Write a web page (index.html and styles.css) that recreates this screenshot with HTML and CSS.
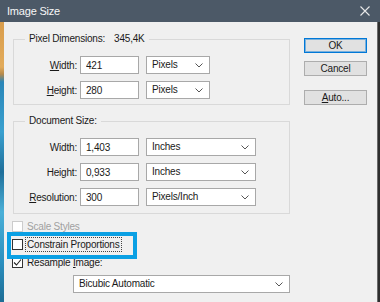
FILE: index.html
```html
<!DOCTYPE html>
<html lang="en">
<head>
  <meta charset="UTF-8" />
  <title>Image Size</title>
  <link rel="stylesheet" href="styles.css">
</head>
<body>
  <div class="window">
    <div class="titlebar">
      <span class="title">Image Size</span>
      <svg class="close" width="10" height="10" viewBox="0 0 10 10">
        <path d="M0.5 0.5 L9.5 9.5 M9.5 0.5 L0.5 9.5" stroke="#e8e8e8" stroke-width="1.1" fill="none"/>
      </svg>
    </div>
    <div class="frame">
      <div class="strip-left"></div>
      <div class="dialog">
        <div class="top">
          <div class="groups">
            <fieldset class="group">
              <legend>Pixel Dimensions:<span class="size">345,4K</span></legend>
              <div class="rows">
                <div class="row">
                  <label class="lbl"><u>W</u>idth:</label>
                  <input class="field" type="text" value="421">
                  <div class="dropdown short">Pixels<svg class="chev" width="8" height="5" viewBox="0 0 8 5"><path d="M0.5 0.5 L4 4 L7.5 0.5" stroke="#555" fill="none"/></svg></div>
                </div>
                <div class="row">
                  <label class="lbl"><u>H</u>eight:</label>
                  <input class="field" type="text" value="280">
                  <div class="dropdown short">Pixels<svg class="chev" width="8" height="5" viewBox="0 0 8 5"><path d="M0.5 0.5 L4 4 L7.5 0.5" stroke="#555" fill="none"/></svg></div>
                </div>
              </div>
            </fieldset>
            <fieldset class="group second">
              <legend>Document Size:</legend>
              <div class="rows">
                <div class="row">
                  <label class="lbl">Width:</label>
                  <input class="field" type="text" value="1,403">
                  <div class="dropdown">Inches<svg class="chev" width="8" height="5" viewBox="0 0 8 5"><path d="M0.5 0.5 L4 4 L7.5 0.5" stroke="#555" fill="none"/></svg></div>
                </div>
                <div class="row">
                  <label class="lbl">Height:</label>
                  <input class="field" type="text" value="0,933">
                  <div class="dropdown">Inches<svg class="chev" width="8" height="5" viewBox="0 0 8 5"><path d="M0.5 0.5 L4 4 L7.5 0.5" stroke="#555" fill="none"/></svg></div>
                </div>
                <div class="row">
                  <label class="lbl"><u>R</u>esolution:</label>
                  <input class="field" type="text" value="300">
                  <div class="dropdown">Pixels/Inch<svg class="chev" width="8" height="5" viewBox="0 0 8 5"><path d="M0.5 0.5 L4 4 L7.5 0.5" stroke="#555" fill="none"/></svg></div>
                </div>
              </div>
            </fieldset>
          </div>
          <div class="buttons">
            <button class="btn default">OK</button>
            <button class="btn">Cancel</button>
            <button class="btn auto"><u>A</u>uto...</button>
          </div>
        </div>
        <div class="checks">
          <div class="check disabled"><span class="box"></span><span>Scale Styles</span></div>
          <div class="check"><span class="box"></span><span class="focus">Constrain Proportions</span></div>
          <div class="check"><span class="box"><svg width="9" height="9" viewBox="0 0 9 9"><path d="M1 4.5 L3.5 7 L8 1.5" stroke="#222" stroke-width="1.1" fill="none"/></svg></span><span>Resample <u>I</u>mage:</span></div>
          <div class="dropdown wide">Bicubic Automatic<svg class="chev" width="8" height="5" viewBox="0 0 8 5"><path d="M0.5 0.5 L4 4 L7.5 0.5" stroke="#555" fill="none"/></svg></div>
        </div>
      </div>
      <div class="strip-right"></div>
    </div>
    <div class="highlight"></div>
  </div>
</body>
</html>
```

FILE: styles.css
```css
body {
  margin: 0;
  font-family: "Liberation Sans", Arial, sans-serif;
  font-size: 10px;
  letter-spacing: -0.2px;
  color: #1a1a1a;
  background-color: #333;
}
.window {
  position: relative;
  width: 380px;
  height: 302px;
  overflow: hidden;
}
.titlebar {
  height: 22px;
  background-color: #4c5967;
  display: flex;
  align-items: center;
  justify-content: space-between;
  padding: 0 10px 0 7px;
  box-sizing: border-box;
}
.title {
  color: #f7f7f7;
  font-size: 11px;
}
.frame {
  display: flex;
  height: 280px;
}
.strip-left {
  width: 4px;
  background: linear-gradient(#d99d4c 0, #e2ab5b 45px, #b88a4a 52px, #2a86b8 60px, #3aa0cf 110px, #1f6f9a 150px, #4bb0d8 190px, #2b8fbf 240px, #1d6d95 280px);
}
.strip-right {
  width: 3px;
  background: linear-gradient(90deg, #6b6b6b 0, #6b6b6b 1px, #2e2e2e 1px);
}
.dialog {
  flex: 1;
  background-color: #f0f0f0;
  padding: 11px 0 0 8px;
}
.top {
  display: flex;
}
.groups {
  width: 277px;
  margin-left: 1px;
}
.group {
  margin: 0;
  padding: 0 0 5px 0;
  border: 1px solid #d9d9d9;
}
.group.second {
  margin-top: 10px;
  padding-bottom: 7px;
}
.group legend {
  margin-left: 11px;
  padding: 0 4px;
  line-height: 12px;
  font-size: 10px;
}
.size {
  margin-left: 9px;
}
.rows {
  display: flex;
  flex-direction: column;
  gap: 7px;
  padding-top: 11px;
}
.row {
  display: flex;
  align-items: center;
}
.lbl {
  width: 63px;
  text-align: right;
  margin-right: 3px;
}
.field {
  width: 59px;
  height: 18px;
  box-sizing: border-box;
  border: 1px solid #a8a8a8;
  background-color: #fff;
  font-family: inherit;
  font-size: 10px;
  letter-spacing: inherit;
  color: #1a1a1a;
  padding: 0 5px;
  margin: 0 7px 0 0;
}
.dropdown {
  width: 110px;
  height: 18px;
  box-sizing: border-box;
  border: 1px solid #a8a8a8;
  background-color: #fff;
  padding: 0 5px;
  line-height: 16px;
  display: flex;
  align-items: center;
  justify-content: space-between;
}
.dropdown.short {
  width: 64px;
}
.dropdown.wide {
  width: 217px;
  margin: 4px 0 0 61px;
}
.chev {
  margin-right: 1px;
}
.buttons {
  display: flex;
  flex-direction: column;
  gap: 8px;
  margin-left: 14px;
  padding-top: 5px;
}
.btn {
  width: 63px;
  height: 15px;
  padding: 0;
  border: 1px solid #adadad;
  background-color: #e1e1e1;
  font-family: inherit;
  font-size: 10px;
  letter-spacing: inherit;
  color: #1a1a1a;
  line-height: 13px;
}
.btn.default {
  border-color: #0078d7;
  box-shadow: inset 0 0 0 1px rgba(0, 120, 215, 0.45);
}
.btn.auto {
  margin-top: 6px;
}
.checks {
  padding-top: 3px;
}
.check {
  display: flex;
  align-items: center;
  height: 18px;
}
.check .box {
  width: 11px;
  height: 11px;
  box-sizing: border-box;
  border: 1px solid #333;
  background-color: #fff;
  margin-right: 4px;
  display: flex;
  align-items: center;
  justify-content: center;
}
.check.disabled {
  color: #a0a0a0;
}
.check.disabled .box {
  border-color: #cccccc;
}
.focus {
  outline: 1px dotted #444;
  outline-offset: 1px;
}
.highlight {
  position: absolute;
  left: 7px;
  top: 232px;
  width: 130px;
  height: 27px;
  box-sizing: border-box;
  border: 4px solid #0aa0e4;
}
```
